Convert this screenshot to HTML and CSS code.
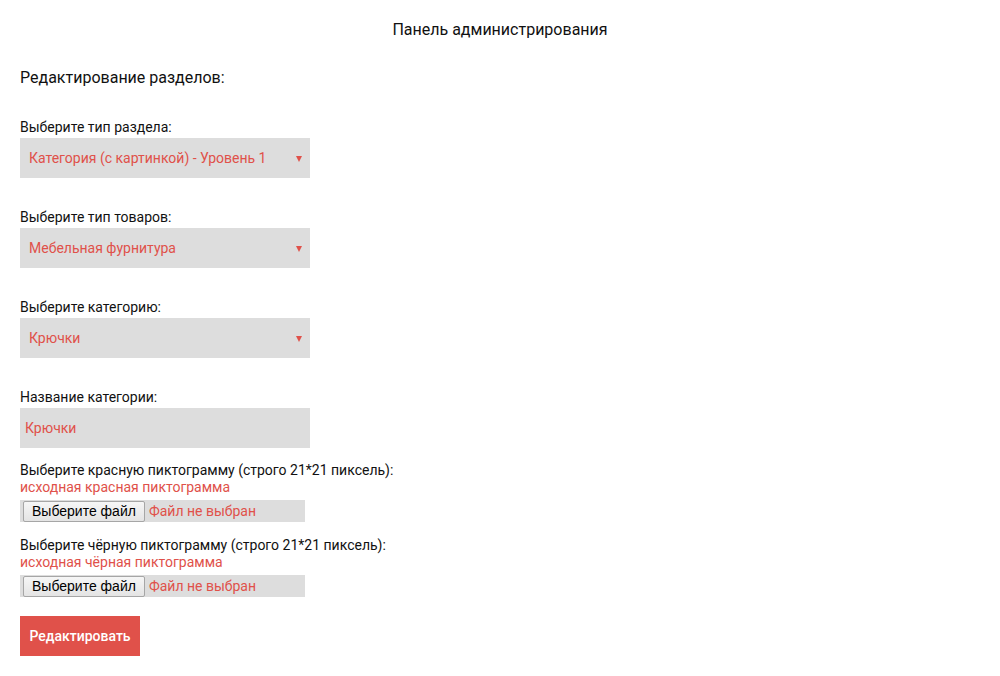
FILE: index.html
```html
<!DOCTYPE html>
<html lang="ru">
<head>
<meta charset="utf-8">
<title>Панель администрирования</title>
<link rel="stylesheet" href="styles.css">
</head>
<body>
<header class="top">Панель администрирования</header>
<main class="content">
  <h2 class="heading">Редактирование разделов:</h2>

  <div class="group">
    <div class="label">Выберите тип раздела:</div>
    <div class="select"><span>Категория (с картинкой) - Уровень 1</span><i class="arrow"></i></div>
  </div>

  <div class="group">
    <div class="label">Выберите тип товаров:</div>
    <div class="select"><span>Мебельная фурнитура</span><i class="arrow"></i></div>
  </div>

  <div class="group">
    <div class="label">Выберите категорию:</div>
    <div class="select"><span>Крючки</span><i class="arrow"></i></div>
  </div>

  <div class="group group-input">
    <div class="label">Название категории:</div>
    <div class="input">Крючки</div>
  </div>

  <div class="file-group">
    <div class="label">Выберите красную пиктограмму (строго 21*21 пиксель):</div>
    <div class="note">исходная красная пиктограмма</div>
    <div class="file"><span class="file-btn">Выберите файл</span><span class="file-text">Файл не выбран</span></div>
  </div>

  <div class="file-group">
    <div class="label">Выберите чёрную пиктограмму (строго 21*21 пиксель):</div>
    <div class="note">исходная чёрная пиктограмма</div>
    <div class="file"><span class="file-btn">Выберите файл</span><span class="file-text">Файл не выбран</span></div>
  </div>

  <button class="submit">Редактировать</button>
</main>
</body>
</html>
```

FILE: styles.css
```css
html, body {
  margin: 0;
  padding: 0;
  background: #fff;
}
body {
  font-family: Roboto, "Liberation Sans", sans-serif;
  color: #111;
  font-size: 14px;
}
.top {
  height: 60px;
  line-height: 60px;
  text-align: center;
  font-size: 16px;
  color: #111;
}
.content {
  padding: 0 20px;
}
.heading {
  margin: 8px 0 30px;
  font-size: 16px;
  font-weight: normal;
  line-height: 20px;
}
.group {
  margin-bottom: 30px;
}
.group-input {
  margin-bottom: 14px;
}
.label {
  font-size: 14px;
  line-height: 18px;
  margin-bottom: 2px;
}
.select {
  width: 290px;
  height: 40px;
  box-sizing: border-box;
  background: #dddddd;
  display: flex;
  align-items: center;
  justify-content: space-between;
  padding: 0 8px 0 9px;
  color: #e0514a;
  font-size: 14px;
}
.arrow {
  width: 0;
  height: 0;
  border-left: 3px solid transparent;
  border-right: 3px solid transparent;
  border-top: 6px solid #e0514a;
  margin-top: 1px;
}
.input {
  width: 290px;
  height: 40px;
  box-sizing: border-box;
  background: #dddddd;
  display: flex;
  align-items: center;
  padding: 0 5px;
  color: #e0514a;
  font-size: 14px;
}
.file-group {
  margin-bottom: 15px;
}
.file-group .label {
  line-height: 17px;
  margin-bottom: 0;
}
.note {
  color: #e0514a;
  font-size: 14px;
  line-height: 17px;
  margin-bottom: 4px;
}
.file {
  width: 285px;
  height: 22px;
  background: #dddddd;
  display: flex;
  align-items: center;
  padding-left: 3px;
  box-sizing: border-box;
}
.file-btn {
  height: 21px;
  box-sizing: border-box;
  padding: 0 8px;
  border: 1px solid #a6a6a6;
  border-radius: 2px;
  background: linear-gradient(#f6f6f6, #e4e4e4);
  color: #000;
  font-family: "Liberation Sans", Arial, sans-serif;
  font-size: 14px;
  line-height: 19px;
}
.file-text {
  color: #e0514a;
  font-size: 14px;
  margin-left: 4px;
}
.submit {
  margin-top: 19px;
  width: 120px;
  height: 40px;
  border: none;
  background: #e0514a;
  color: #fff;
  font-family: Roboto, "Liberation Sans", sans-serif;
  font-size: 14px;
  font-weight: 500;
  padding: 0;
  display: block;
}
```
